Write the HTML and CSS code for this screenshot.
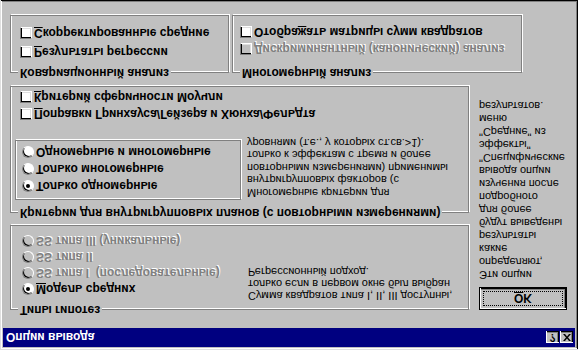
FILE: index.html
```html
<!DOCTYPE html>
<html>
<head>
    <meta charset="utf-8">
    <title>Опции вывода</title>
    <link rel="stylesheet" href="styles.css">
</head>
<body>
    <div class="window">
        <div class="titlebar">
            <span class="title">Опции вывода</span>
            <div class="caption-buttons">
                <span class="cap-btn help">?</span>
                <span class="cap-btn close">
                    <svg width="8" height="7" viewBox="0 0 8 7"><path d="M0 0h2l2 2.5L6 0h2L5 3.5 8 7H6L4 4.5 2 7H0l3-3.5z" fill="#000"/></svg>
                </span>
            </div>
        </div>

        <div class="content">
            <div class="top">
                <div class="left-col">
                    <div class="group hypotheses">
                        <span class="legend">Типы гипотез</span>
                        <div class="hyp-row">
                            <div class="radio-list">
                                <div class="option"><span class="radio checked"></span><u>М</u>одель средних</div>
                                <div class="option disabled"><span class="radio"></span>SS типа I&nbsp;&nbsp;(последовательные)</div>
                                <div class="option disabled"><span class="radio"></span>SS типа II</div>
                                <div class="option disabled"><span class="radio"></span>SS типа III (уникальные)</div>
                            </div>
                            <p class="note hyp-note">Сумма квадратов типа I, II, III доступны,<br>только если в первом окне был выбран<br>Регрессионный подход.</p>
                        </div>
                    </div>

                    <div class="group repeated">
                        <span class="legend">Критерии для внутригрупповых планов (с повторными измерениями)</span>
                        <div class="rep-row">
                            <div class="inner-box">
                                <div class="option tall"><span class="radio checked"></span>Только одномерные</div>
                                <div class="option tall"><span class="radio"></span>Только многомерные</div>
                                <div class="option tall"><span class="radio"></span>Одномерные и многомерные</div>
                            </div>
                            <p class="note rep-note">Многомерные критерии для<br>внутригрупповых факторов (с<br>повторными измерениями) применимы<br>только к эффектам с тремя и более<br>уровнями (т.е., у которых ст.св.&gt;1).</p>
                        </div>
                        <div class="check-list rep-checks">
                            <div class="option tall"><span class="check"></span><u>П</u>оправки Гринхауса/Гейзера и Хюнха/Фельдта</div>
                            <div class="option tall"><span class="check"></span><u>К</u>ритерий сферичности Моучли</div>
                        </div>
                    </div>
                </div>

                <div class="right-col">
                    <div class="ok-button"><span class="focus"><u>O</u>K</span></div>
                    <p class="note side-note">Эти опции<br>определяют,<br>какие<br>результаты<br>будут выведены<br>для более<br>подробного<br>изучения после<br>вывода опции<br>"Специфические<br>эффекты"<br>"Средние" из<br>меню<br>результатов.</p>
                </div>
            </div>

            <div class="bottom">
                <div class="group covariate">
                    <span class="legend">Ковариационный анализ</span>
                    <div class="check-list">
                        <div class="option spaced"><span class="check"></span><u>Р</u>езультаты регрессии</div>
                        <div class="option spaced"><span class="check"></span><u>С</u>корректированные средние</div>
                    </div>
                </div>
                <div class="group multivariate">
                    <span class="legend">Многомерный анализ</span>
                    <div class="check-list">
                        <div class="option tall disabled"><span class="check"></span>Дискриминантный (канонический) анализ</div>
                        <div class="option tall"><span class="check"></span>Отобра<u>ж</u>ать матрицы сумм квадратов</div>
                    </div>
                </div>
            </div>
        </div>
    </div>
</body>
</html>
```

FILE: styles.css
```css
body {
    margin: 0;
    padding: 0;
    font-family: "Liberation Sans", Arial, sans-serif;
    background: #c0c0c0;
}
.window {
    width: 578px;
    height: 350px;
    box-sizing: border-box;
    padding: 3px;
    background: #c0c0c0;
    box-shadow: inset 1px 1px #dfdfdf, inset -1px -1px #000, inset 2px 2px #fff, inset -2px -2px #808080;
    transform: scaleY(-1);
}
.titlebar {
    height: 19px;
    background: #000080;
    display: flex;
    align-items: center;
    justify-content: space-between;
    padding: 0 2px 0 3px;
}
.title {
    color: #fff;
    font-weight: bold;
    font-size: 12px;
}
.caption-buttons {
    display: flex;
    gap: 1px;
}
.cap-btn {
    width: 13px;
    height: 12px;
    box-sizing: border-box;
    background: #c0c0c0;
    box-shadow: inset 1px 1px #fff, inset -1px -1px #000, inset -2px -2px #808080;
    display: flex;
    align-items: center;
    justify-content: center;
    font-size: 10px;
    font-weight: bold;
    line-height: 1;
}
.content {
    padding: 0 7px;
}
.top {
    display: flex;
    gap: 10px;
}
.left-col {
    width: 459px;
}
.group {
    position: relative;
    box-sizing: border-box;
    border: 1px solid #808080;
    box-shadow: inset 1px 1px #fff, 1px 1px #fff;
}
.legend {
    position: absolute;
    top: -8px;
    left: 7px;
    padding: 0 2px;
    background: #c0c0c0;
    font-size: 12px;
    font-weight: bold;
    line-height: 14px;
    white-space: nowrap;
}
.option {
    display: flex;
    align-items: center;
    height: 16px;
    font-size: 12px;
    font-weight: bold;
    white-space: nowrap;
}
.option.tall {
    height: 17px;
}
.option.spaced {
    margin-bottom: 3px;
}
.option.disabled {
    color: #808080;
    text-shadow: 1px 1px 0 #fff;
}
.radio {
    width: 12px;
    height: 12px;
    box-sizing: border-box;
    border-radius: 50%;
    border: 1px solid;
    border-color: #808080 #fff #fff #808080;
    background: #fff;
    box-shadow: inset 1px 1px #000;
    margin-right: 2px;
    position: relative;
    flex-shrink: 0;
}
.radio.checked::after {
    content: "";
    position: absolute;
    left: 3px;
    top: 3px;
    width: 4px;
    height: 4px;
    border-radius: 50%;
    background: #000;
}
.check {
    width: 12px;
    height: 12px;
    box-sizing: border-box;
    border: 1px solid;
    border-color: #808080 #fff #fff #808080;
    background: #fff;
    box-shadow: inset 1px 1px #000, inset -1px -1px #dfdfdf;
    margin-right: 2px;
    flex-shrink: 0;
}
.disabled .radio,
.disabled .check {
    background: #c0c0c0;
}
.note {
    margin: 0;
    font-size: 11px;
    white-space: nowrap;
}

/* Типы гипотез */
.hypotheses {
    margin-top: 18px;
    height: 85px;
}
.hyp-row {
    display: flex;
    align-items: flex-start;
}
.radio-list {
    width: 226px;
    margin: 12px 0 0 11px;
}
.hyp-note {
    margin-top: 7px;
    line-height: 12px;
}

/* повторные измерения */
.repeated {
    margin-top: 12px;
    height: 127px;
}
.rep-row {
    display: flex;
    align-items: flex-start;
}
.inner-box {
    width: 226px;
    height: 60px;
    box-sizing: border-box;
    margin: 12px 0 0 4px;
    padding: 4px 0 0 6px;
    border: 1px solid #808080;
    box-shadow: inset 1px 1px #fff, 1px 1px #fff;
}
.rep-note {
    margin: 13px 0 0 6px;
    line-height: 12.5px;
}
.rep-checks {
    margin: 14px 0 0 9px;
}

/* правая колонка */
.right-col {
    width: 88px;
}
.ok-button {
    margin-top: 18px;
    height: 23px;
    box-sizing: border-box;
    border: 1px solid #000;
    padding: 3px;
    box-shadow: inset 1px 1px #fff, inset -1px -1px #000, inset -2px -2px #808080;
}
.ok-button .focus {
    display: flex;
    align-items: center;
    justify-content: center;
    height: 100%;
    box-sizing: border-box;
    border: 1px dotted #000;
    font-size: 12px;
    font-weight: bold;
}
.side-note {
    margin-top: 6px;
    line-height: 13px;
}

/* нижние группы */
.bottom {
    display: flex;
    gap: 3px;
    margin-top: 13px;
}
.covariate {
    width: 219px;
    height: 58px;
    padding: 12px 0 0 9px;
}
.multivariate {
    width: 290px;
    height: 58px;
    padding: 14px 0 0 7px;
}
```
